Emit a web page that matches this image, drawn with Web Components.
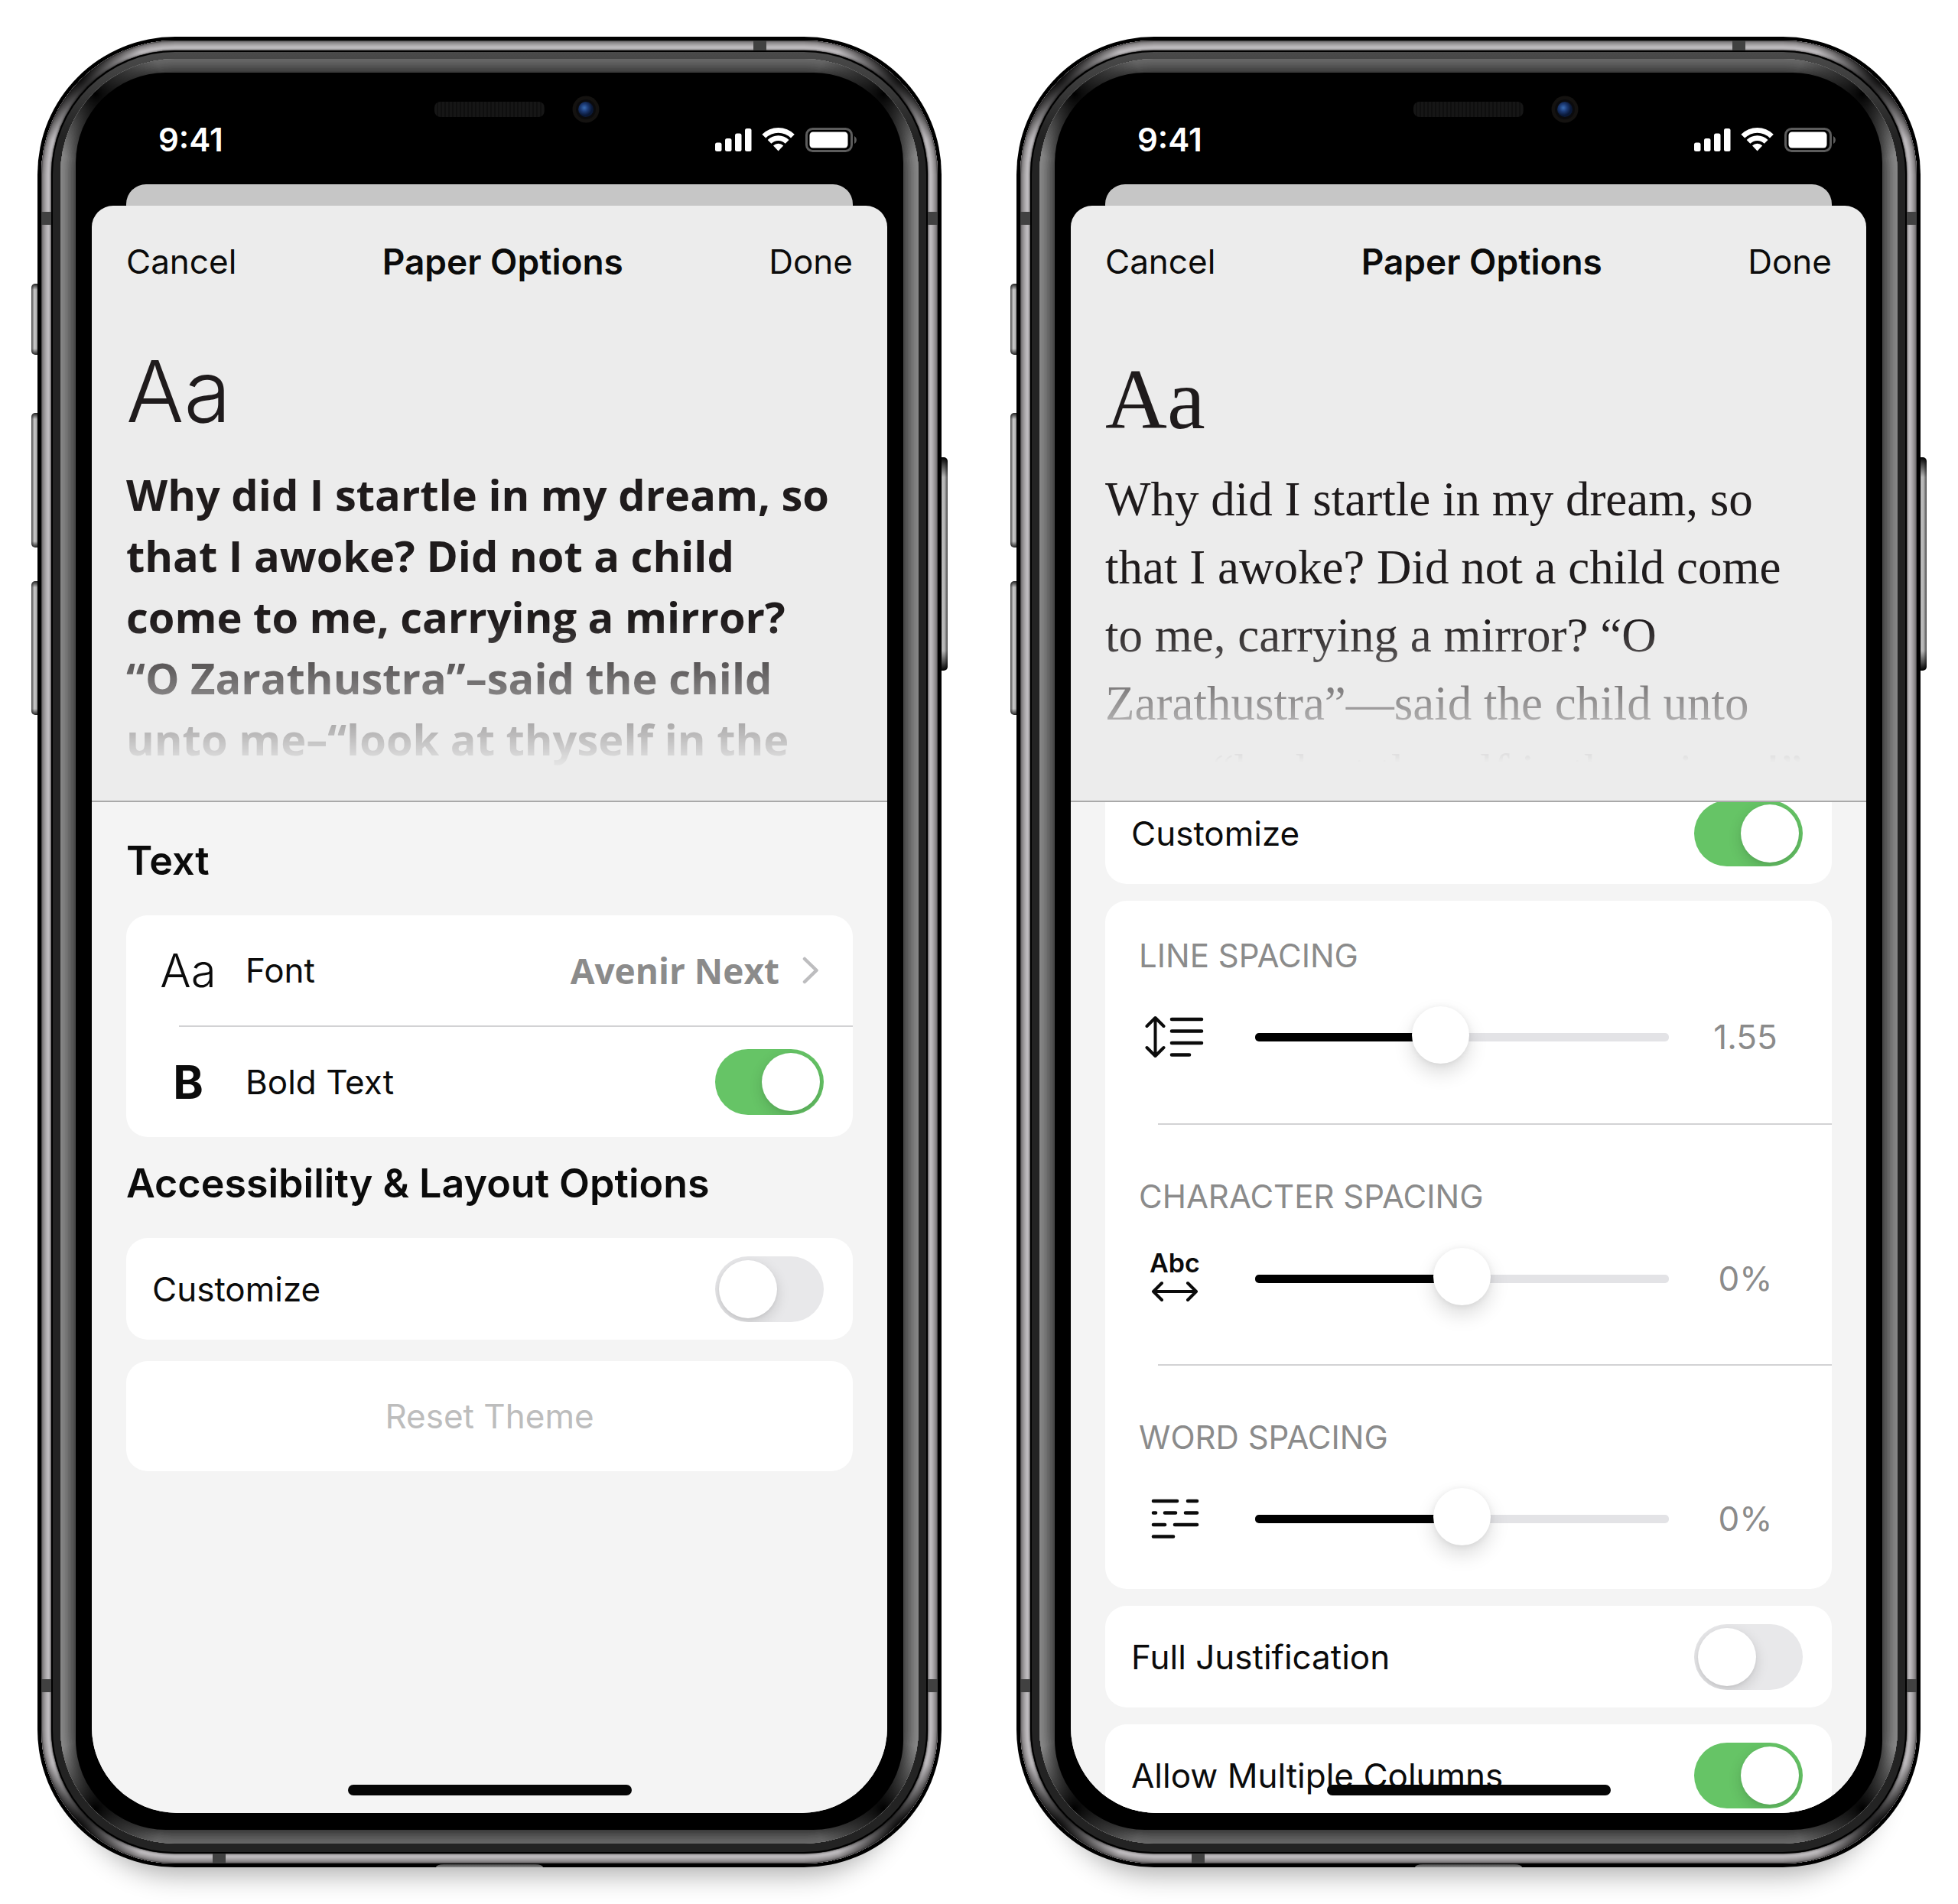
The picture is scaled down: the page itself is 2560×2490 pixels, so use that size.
<!DOCTYPE html>
<html lang="en">
<head>
<meta charset="utf-8">
<meta name="viewport" content="width=device-width, initial-scale=1">
<title>Paper Options</title>
<style>
  body {
    margin: 0;
    box-sizing: border-box;
    height: 100vh;
    padding: 48px 0;
    display: grid;
    grid-template-columns: 1fr 1fr;
    grid-template-rows: minmax(0, 1fr);
    background: #fff;
    color: #0b0b0b;
    font-family: Inter, "Liberation Sans", sans-serif;
    font-size: 44px;
    overflow: hidden;
  }

  phone-frame {
    margin: 0 49px;
  }

  .avenir {
    --preview-font: "Open Sans", Lato, sans-serif;
    --preview-weight: 700;
    --preview-size: 56px;
    --preview-leading: 80px;
    --preview-top: 24px;
    --preview-gap: 25px;
    --glyph-font: Inter, sans-serif;
    --glyph-size: 112px;
    --glyph-weight: 300;
  }

  .charter {
    --preview-font: "Liberation Serif", serif;
    --preview-weight: 400;
    --preview-size: 63px;
    --preview-leading: 89px;
    --preview-top: 35px;
    --preview-gap: 17px;
    --glyph-font: "Liberation Serif", serif;
    --glyph-size: 112px;
    --glyph-weight: 400;
    --fade-end: 580px;
  }

  .scrolled {
    --card-gap: 22px;
    --scroll: -26px;
  }
</style>
</head>
<body>
  <phone-frame>
    <paper-sheet class="avenir">
      <theme-preview slot="preview">
        Why did I startle in my dream, so<br>
        that I awoke? Did not a child<br>
        come to me, carrying a mirror?<br>
        “O Zarathustra”–said the child<br>
        unto me–“look at thyself in the
      </theme-preview>
      <section-title first>Text</section-title>
      <settings-card>
        <link-row value="Avenir Next">Font</link-row>
        <row-divider></row-divider>
        <toggle-row icon="B" checked>Bold Text</toggle-row>
      </settings-card>
      <section-title>Accessibility &amp; Layout Options</section-title>
      <settings-card>
        <toggle-row>Customize</toggle-row>
      </settings-card>
      <settings-card>
        <reset-button>Reset Theme</reset-button>
      </settings-card>
    </paper-sheet>
  </phone-frame>

  <phone-frame>
    <paper-sheet class="charter scrolled">
      <theme-preview slot="preview">
        Why did I startle in my dream, so<br>
        that I awoke? Did not a child come<br>
        to me, carrying a mirror? “O<br>
        Zarathustra”—said the child unto<br>
        me—“look at thyself in the mirror!”
      </theme-preview>
      <settings-card>
        <toggle-row checked>Customize</toggle-row>
      </settings-card>
      <settings-card>
        <slider-row icon="line" value="44" readout="1.55">LINE SPACING</slider-row>
        <row-divider spaced></row-divider>
        <slider-row icon="character" value="50" readout="0%">CHARACTER SPACING</slider-row>
        <row-divider spaced></row-divider>
        <slider-row icon="word" value="50" readout="0%">WORD SPACING</slider-row>
      </settings-card>
      <settings-card>
        <toggle-row>Full Justification</toggle-row>
      </settings-card>
      <settings-card>
        <toggle-row checked>Allow Multiple Columns</toggle-row>
      </settings-card>
    </paper-sheet>
  </phone-frame>

<script>
  // concentric inset rings, outermost colour first
  const rings = (step, colors) =>
    colors.map((c, i) => `inset 0 0 0 ${(i + 1) * step}px ${c}`).join(', ');

  const steel = rings(1, [
    '#4f4d4e', '#767375', '#868385', '#918e90', '#9b989a', '#a5a2a4', '#aeabad',
    '#b6b3b6', '#bbb8bb', '#bdbabd', '#b3b0b3', '#a19ea0', '#6f6d6e'
  ]);

  const glow = rings(2, [
    '#858585', '#828282', '#7d7d7d', '#777', '#707070',
    '#686868', '#606060', '#585858', '#505050', '#484848'
  ]);

  // the reflections die away in the four corners
  const corners = (at, size, alpha) =>
    [['left', 'top'], ['right', 'top'], ['left', 'bottom'], ['right', 'bottom']]
      .map(([x, y]) => `radial-gradient(circle at ${x} ${at}px ${y} ${at}px, rgba(0,0,0,${alpha}) 0, rgba(0,0,0,0) ${size}px)`)
      .join(', ');

  class PhoneFrame extends HTMLElement {
    constructor() {
      super();
      this.attachShadow({ mode: 'open' });
      this.shadowRoot.innerHTML = `
      <style>
        :host {
          display: flex;
          position: relative;
          min-height: 0;
        }
        div { box-sizing: border-box; }
        .layer {
          flex: 1;
          min-width: 0;
          min-height: 0;
          display: flex;
        }
        .shell {
          position: relative;
          padding: 5px;
          background: #000;
          border-radius: 180px;
          box-shadow: 0 60px 34px -50px rgba(0,0,0,0.32);
        }
        .steel {
          position: relative;
          padding: 13px;
          border-radius: 175px;
          box-shadow: ${steel};
        }
        .rim {
          position: relative;
          padding: 2px;
          background: #000;
          border-radius: 162px;
        }
        .dark {
          padding: 9px 10px 11px;
          background: linear-gradient(#4a4a4a, #232323 110px);
          border-radius: 160px;
        }
        .glow {
          position: relative;
          padding: 18px 20px;
          border-radius: 150px;
          background: #484848;
          box-shadow: ${glow};
        }
        .steel::before, .glow::before {
          content: "";
          position: absolute;
          inset: 0;
          border-radius: inherit;
        }
        .steel::before { background: ${corners(46, 90, 0.95)}; }
        .glow::before {
          background:
            ${corners(46, 90, 1)},
            linear-gradient(rgba(0,0,0,0.24) 18px, transparent 50px calc(100% - 50px), rgba(0,0,0,0.24) calc(100% - 18px));
        }
        .bezel {
          position: relative;
          flex-direction: column;
          padding: 0 21px 22px;
          background: #000;
          border-radius: 118px;
        }
        .screen {
          flex: 1;
          min-height: 0;
          display: flex;
          flex-direction: column;
          overflow: hidden;
          border-radius: 0 0 112px 112px;
        }
        .key {
          position: absolute;
          width: 11px;
          border-radius: 5px 0 0 5px;
          background:
            linear-gradient(#222, transparent 8px calc(100% - 8px), #222),
            linear-gradient(90deg, #444, #ccc 4px, #aaa 7px, #333);
        }
        .key.right {
          border-radius: 0 5px 5px 0;
          background:
            linear-gradient(#000, transparent 26px calc(100% - 26px), #000),
            linear-gradient(90deg, #555, #bbb 4px, #b5b5b5 7px, #444);
        }
        .band { position: absolute; background: #414141; }
        .band.side { width: 13px; height: 17px; }
        .band.edge { width: 17px; height: 13px; }
        .port {
          position: absolute;
          left: 50%;
          bottom: 0;
          width: 140px;
          height: 4px;
          margin-left: -70px;
          border-radius: 10px 10px 0 0 / 4px 4px 0 0;
          background: linear-gradient(#444, #8a8a8a);
        }
      </style>
      <div class="key" style="left:-8px; top:323px; height:93px"></div>
      <div class="key" style="left:-8px; top:492px; height:176px"></div>
      <div class="key" style="left:-8px; top:712px; height:175px"></div>
      <div class="key right" style="right:-8px; top:550px; height:279px"></div>
      <div class="layer shell">
        <div class="layer steel">
          <div class="band side" style="left:0; top:224px"></div>
          <div class="band side" style="right:0; top:224px"></div>
          <div class="band side" style="left:0; bottom:224px"></div>
          <div class="band side" style="right:0; bottom:224px"></div>
          <div class="band edge" style="right:224px; top:0"></div>
          <div class="band edge" style="left:224px; bottom:0"></div>
          <div class="layer rim">
            <div class="layer dark">
              <div class="layer glow">
                <div class="layer bezel">
                  <status-bar></status-bar>
                  <div class="screen"><slot></slot></div>
                </div>
              </div>
            </div>
          </div>
        </div>
        <div class="port"></div>
      </div>
      `;
    }
  }

  class StatusBar extends HTMLElement {
    constructor() {
      super();
      this.attachShadow({ mode: 'open' });
      this.shadowRoot.innerHTML = `
      <style>
        :host {
          display: block;
          padding: 30px 0 36px;
          color: #fff;
        }
        .sensors {
          display: grid;
          grid-template-columns: 1fr 144px 1fr;
          gap: 36px;
          align-items: center;
        }
        .speaker {
          grid-column: 2;
          height: 20px;
          border-radius: 8px;
          background: repeating-linear-gradient(90deg, #161616 0 3px, #0f0f0f 3px 5px);
        }
        .camera {
          display: block;
          width: 36px;
          height: 36px;
        }
        .status {
          display: flex;
          justify-content: space-between;
          align-items: center;
          height: 44px;
          padding: 0 39px 0 87px;
        }
        time {
          font-size: 42px;
          font-weight: 600;
          line-height: 44px;
        }
        .icons { display: block; width: 186px; height: 34px; }
      </style>
      <div class="sensors">
        <div class="speaker"></div>
        <svg class="camera" viewBox="0 0 36 36">
          <defs>
            <radialGradient id="lens" cx="0.4" cy="0.4">
              <stop offset="0" stop-color="#3a6cb4"/>
              <stop offset="0.5" stop-color="#1c3a74"/>
              <stop offset="1" stop-color="#0a1836"/>
            </radialGradient>
          </defs>
          <circle cx="18" cy="18" r="17.5" fill="#141210"/>
          <circle cx="18" cy="18" r="13" fill="#0b0b0d"/>
          <circle cx="18" cy="18" r="10" fill="url(#lens)"/>
        </svg>
      </div>
      <div class="status">
        <time>9:41</time>
        <svg class="icons" viewBox="0 0 186 34" fill="#fff">
          <rect x="0" y="20.500" width="8.500" height="11.500" rx="2.500"/>
          <rect x="13" y="15" width="8.500" height="17" rx="2.500"/>
          <rect x="26" y="8.500" width="8.500" height="23.500" rx="2.500"/>
          <rect x="39" y="2" width="8.500" height="30" rx="2.500"/>
          <path d="M61.400 9.800 A30 30 0 0 1 103.800 9.800 L99 14.600 A23.200 23.200 0 0 0 66.200 14.600 Z"/>
          <path d="M68.700 17.100 A19.600 19.600 0 0 1 96.500 17.100 L91.800 21.800 A13 13 0 0 0 73.400 21.800 Z"/>
          <path d="M76 24.500 A9.400 9.400 0 0 1 89.200 24.500 L82.600 31.600 Z"/>
          <rect x="119.500" y="2.500" width="59" height="29" rx="8" fill="none" stroke="#5c5c5c" stroke-width="3"/>
          <rect x="123.500" y="6.500" width="50" height="21" rx="4.500"/>
          <path d="M182 12 A5.800 5.800 0 0 1 182 22 Z" fill="#5c5c5c"/>
        </svg>
      </div>
      `;
    }
  }

  class PaperSheet extends HTMLElement {
    constructor() {
      super();
      this.attachShadow({ mode: 'open' });
      this.shadowRoot.innerHTML = `
      <style>
        :host {
          flex: 1;
          min-height: 0;
          display: flex;
          flex-direction: column;
        }
        .behind {
          flex: none;
          height: 28px;
          margin: 0 45px;
          background: #c6c6c6;
          border-radius: 26px 26px 0 0;
        }
        .sheet {
          flex: 1;
          min-height: 0;
          display: flex;
          flex-direction: column;
          overflow: hidden;
          background: #ececec;
          border-radius: 28px 28px 0 0;
        }
        header {
          flex: none;
          display: flex;
          justify-content: space-between;
          align-items: center;
          box-sizing: border-box;
          height: 148px;
          padding: 0 45px 2px;
        }
        h1 { margin: 0; font-size: 46px; font-weight: 600; }
        button {
          padding: 0;
          border: 0;
          background: none;
          color: inherit;
          font: inherit;
        }
        .list {
          flex: 1;
          min-height: 0;
          overflow: hidden;
          padding: 0 45px;
          border-top: 2px solid #a9a9a9;
          background: #f4f4f4;
        }
        .content { margin-top: var(--scroll, 0); }
        .home {
          position: absolute;
          left: 50%;
          bottom: 45px;
          width: 371px;
          height: 14px;
          margin-left: -185px;
          border-radius: 7px;
          background: #050505;
        }
      </style>
      <div class="behind"></div>
      <div class="sheet">
        <header>
          <button type="button">Cancel</button>
          <h1>Paper Options</h1>
          <button type="button">Done</button>
        </header>
        <slot name="preview"></slot>
        <div class="list">
          <div class="content"><slot></slot></div>
        </div>
      </div>
      <div class="home"></div>
      `;
    }
  }

  class ThemePreview extends HTMLElement {
    constructor() {
      super();
      this.attachShadow({ mode: 'open' });
      this.shadowRoot.innerHTML = `
      <style>
        :host {
          flex: none;
          display: block;
          box-sizing: border-box;
          height: 630px;
          padding: var(--preview-top) 45px 0;
          white-space: nowrap;
          color: #1f1b1c;
          font-family: var(--preview-font);
          -webkit-mask-image: linear-gradient(#000 395px, transparent var(--fade-end, 590px));
          mask-image: linear-gradient(#000 395px, transparent var(--fade-end, 590px));
        }
        .glyph {
          font-family: var(--glyph-font);
          font-size: var(--glyph-size);
          font-weight: var(--glyph-weight);
          line-height: 140px;
        }
        p {
          margin: var(--preview-gap) 0 0;
          font-size: var(--preview-size);
          font-weight: var(--preview-weight);
          line-height: var(--preview-leading);
        }
      </style>
      <div class="glyph">Aa</div>
      <p><slot></slot></p>
      `;
    }
  }

  class SectionTitle extends HTMLElement {
    constructor() {
      super();
      this.attachShadow({ mode: 'open' });
      this.shadowRoot.innerHTML = `
      <style>
        :host { display: block; padding: 29px 0 39px; }
        :host([first]) { padding-top: 45px; }
        h2 {
          margin: 0;
          font-size: 52px;
          font-weight: 600;
          line-height: 64px;
          white-space: nowrap;
        }
      </style>
      <h2><slot></slot></h2>
      `;
    }
  }

  class SettingsCard extends HTMLElement {
    constructor() {
      super();
      this.attachShadow({ mode: 'open' });
      this.shadowRoot.innerHTML = `
      <style>
        :host {
          display: block;
          background: #fff;
          border-radius: 28px;
          margin-bottom: var(--card-gap, 28px);
        }
      </style>
      <slot></slot>
      `;
    }

    connectedCallback() {
      // a heading brings its own space above it
      const next = this.nextElementSibling;
      if (next && next.localName === 'section-title') {
        this.style.marginBottom = '0';
      }
    }
  }

  class RowDivider extends HTMLElement {
    constructor() {
      super();
      this.attachShadow({ mode: 'open' });
      this.shadowRoot.innerHTML = `
      <style>
        :host {
          display: block;
          height: 2px;
          margin-left: 69px;
          background: #d2d2d4;
        }
        :host([spaced]) {
          margin-top: 21px;
          margin-bottom: 22px;
        }
      </style>
      `;
    }
  }

  class LinkRow extends HTMLElement {
    constructor() {
      super();
      this.attachShadow({ mode: 'open' });
      this.shadowRoot.innerHTML = `
      <style>
        :host { display: block; }
        button {
          display: flex;
          align-items: center;
          width: 100%;
          height: 144px;
          padding: 0 44px 0 34px;
          border: 0;
          background: none;
          color: inherit;
          font: inherit;
          text-align: left;
        }
        .icon {
          width: 94px;
          margin-right: 28px;
          font-size: 60px;
          font-weight: 300;
          text-align: center;
        }
        .label { flex: 1; }
        .value {
          margin-right: 30px;
          color: #8b8b8b;
          font-family: "Open Sans", Lato, sans-serif;
          font-size: 46px;
          font-weight: 700;
        }
        svg { width: 22px; height: 36px; }
      </style>
      <button type="button">
        <span class="icon">Aa</span>
        <span class="label"><slot></slot></span>
        <span class="value"></span>
        <svg viewBox="0 0 22 36" fill="none" stroke="#bdbdbf" stroke-width="4.500" stroke-linecap="round" stroke-linejoin="round">
          <path d="M3 3 L18.500 18 L3 33"/>
        </svg>
      </button>
      `;
    }

    connectedCallback() {
      this.shadowRoot.querySelector('.value').textContent = this.getAttribute('value');
    }
  }

  class ToggleRow extends HTMLElement {
    constructor() {
      super();
      this.attachShadow({ mode: 'open' });
      this.shadowRoot.innerHTML = `
      <style>
        :host { display: block; }
        label {
          display: flex;
          align-items: center;
          height: 133px;
          padding: 0 38px 0 34px;
        }
        :host([icon]) label { height: 144px; }
        .icon { display: none; }
        :host([icon]) .icon {
          display: block;
          width: 94px;
          margin-right: 28px;
          font-size: 60px;
          font-weight: 700;
          text-align: center;
        }
        .label { flex: 1; }
        input {
          appearance: none;
          display: flex;
          align-items: center;
          box-sizing: border-box;
          width: 142px;
          height: 86px;
          margin: 0;
          padding: 5px;
          overflow: hidden;
          border-radius: 43px;
          background: #e8e8ea;
        }
        input::before {
          content: "";
          width: 76px;
          height: 76px;
          border-radius: 50%;
          background: #fff;
          box-shadow: 0 6px 18px rgba(0,0,0,0.14), 0 2px 4px rgba(0,0,0,0.05);
        }
        input:checked {
          justify-content: flex-end;
          background: #66c466;
        }
      </style>
      <label>
        <span class="icon"></span>
        <span class="label"><slot></slot></span>
        <input type="checkbox" role="switch">
      </label>
      `;
    }

    connectedCallback() {
      this.shadowRoot.querySelector('input').checked = this.hasAttribute('checked');
      this.shadowRoot.querySelector('.icon').textContent = this.getAttribute('icon') || '';
    }
  }

  const sliderIcons = {
    line: `
      <svg width="78" height="56" viewBox="0 0 78 56" fill="none" stroke="#0b0b0b" stroke-width="4" stroke-linecap="round" stroke-linejoin="round">
        <path d="M13.500 3 V53 M2.500 14 L13.500 3 L24.500 14 M2.500 42 L13.500 53 L24.500 42"/>
        <path stroke-width="4.600" d="M35 5 H74 M35 20.500 H74 M35 36 H74 M35 51.500 H58"/>
      </svg>`,
    character: `
      <span>Abc</span>
      <svg width="62" height="28" viewBox="0 0 62 28" fill="none" stroke="#0b0b0b" stroke-width="4" stroke-linecap="round" stroke-linejoin="round">
        <path d="M3 14 H59 M14 3 L3 14 L14 25 M48 3 L59 14 L48 25"/>
      </svg>`,
    word: `
      <svg width="64" height="54" viewBox="0 0 64 54" fill="none" stroke="#0b0b0b" stroke-width="4.600" stroke-linecap="round">
        <path d="M4 4 H35 M49 4 H61 M4 19.500 H7 M19 19.500 H33 M46 19.500 H61 M4 35 H19 M32 35 H61 M4 50.500 H30"/>
      </svg>`
  };

  class SliderRow extends HTMLElement {
    constructor() {
      super();
      this.attachShadow({ mode: 'open' });
      this.shadowRoot.innerHTML = `
      <style>
        :host {
          display: block;
          height: 270px;
          box-sizing: border-box;
          padding: 42px 43px 0 44px;
          color: #8b8b8b;
        }
        label {
          display: block;
          font-size: 42px;
          line-height: 60px;
        }
        .controls {
          display: grid;
          grid-template-columns: 94px 1fr 140px;
          align-items: center;
          height: 76px;
          margin-top: 38px;
        }
        .icon {
          display: flex;
          flex-direction: column;
          align-items: center;
          color: #0b0b0b;
        }
        .icon span {
          margin-bottom: 4px;
          font-size: 34px;
          font-weight: 600;
          line-height: 38px;
        }
        .icon span + svg { margin-bottom: 8px; }
        input {
          appearance: none;
          height: 76px;
          min-width: 0;
          margin: 0 30px 0 58px;
          background: none;
        }
        input::-webkit-slider-runnable-track {
          height: 11px;
          border-radius: 5px;
          background: linear-gradient(90deg, #000 var(--fill), #e3e3e6 var(--fill));
        }
        input::-webkit-slider-thumb {
          appearance: none;
          width: 75px;
          height: 75px;
          margin-top: -35px;
          border: 0;
          border-radius: 50%;
          background: #fff;
          box-shadow: 0 12px 26px rgba(0,0,0,0.14), 0 1px 8px rgba(0,0,0,0.07);
        }
        output {
          font-size: 44px;
          text-align: center;
        }
      </style>
      <label for="range"><slot></slot></label>
      <div class="controls">
        <div class="icon"></div>
        <input id="range" type="range" min="0" max="100">
        <output for="range"></output>
      </div>
      `;
    }

    connectedCallback() {
      const value = this.getAttribute('value');
      const input = this.shadowRoot.querySelector('input');
      input.value = value;
      input.style.setProperty('--fill', value + '%');
      this.shadowRoot.querySelector('.icon').innerHTML = sliderIcons[this.getAttribute('icon')];
      this.shadowRoot.querySelector('output').textContent = this.getAttribute('readout');
    }
  }

  class ResetButton extends HTMLElement {
    constructor() {
      super();
      this.attachShadow({ mode: 'open' });
      this.shadowRoot.innerHTML = `
      <style>
        :host { display: block; }
        button {
          display: block;
          width: 100%;
          height: 144px;
          border: 0;
          background: none;
          color: #bdbdbd;
          font: inherit;
        }
      </style>
      <button type="button" disabled><slot></slot></button>
      `;
    }
  }

  customElements.define('phone-frame', PhoneFrame);
  customElements.define('status-bar', StatusBar);
  customElements.define('paper-sheet', PaperSheet);
  customElements.define('theme-preview', ThemePreview);
  customElements.define('section-title', SectionTitle);
  customElements.define('settings-card', SettingsCard);
  customElements.define('row-divider', RowDivider);
  customElements.define('link-row', LinkRow);
  customElements.define('toggle-row', ToggleRow);
  customElements.define('slider-row', SliderRow);
  customElements.define('reset-button', ResetButton);
</script>
</body>
</html>
